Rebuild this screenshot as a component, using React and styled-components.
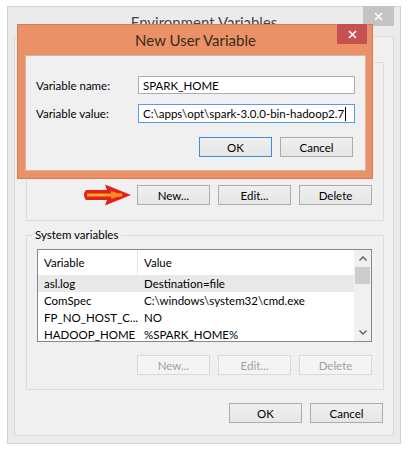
import React from 'react'
import styled, { createGlobalStyle } from 'styled-components'

const GlobalStyle = createGlobalStyle`
  body {
    margin: 0;
    background: #ffffff;
    font-family: 'Lato', 'Noto Sans', sans-serif;
    font-size: 11.5px;
    color: #000;
  }
`

const Page = styled.div`
  padding: 6px 0 0 7px;
`

const Window = styled.div`
  position: relative;
  width: 394px;
  box-sizing: border-box;
  border: 1px solid #d2d2d2;
  background: #ebebeb;
  padding: 0 6px 7px;
`

const TitleBar = styled.div`
  display: grid;
  grid-template-columns: 1fr auto 1fr;
  height: ${(p) => p.$height}px;
  align-items: center;
`

const Title = styled.div`
  grid-column: 2;
  font-size: 15px;
  color: ${(p) => p.$color};
  white-space: nowrap;
`

const CloseButton = styled.div`
  grid-column: 3;
  justify-self: end;
  align-self: start;
  width: ${(p) => p.$width}px;
  height: 20px;
  margin-top: -1px;
  margin-right: ${(p) => p.$offset}px;
  background: ${(p) => p.$bg};
  display: flex;
  align-items: center;
  justify-content: center;
`

const Client = styled.div`
  background: #f0f0f0;
  border: 1px solid #dadada;
  padding: 17px 9px 12px 11px;
`

const Group = styled.fieldset`
  margin: 0 0 ${(p) => p.$gap}px;
  border: 1px solid #dcdcdc;
  padding: 6px 11px 14px 10px;
  min-width: 0;
`

const Legend = styled.legend`
  padding: 0 3px;
  margin-left: -5px;
  height: 16px;
  line-height: 16px;
`

const List = styled.div`
  display: flex;
  height: ${(p) => p.$height}px;
  box-sizing: border-box;
  border: 1px solid #828790;
  background: #fff;
  overflow: hidden;
`

const Rows = styled.div`
  flex: 1;
`

const Row = styled.div`
  display: grid;
  grid-template-columns: 100px 1fr;
  height: ${(p) => (p.$header ? 25 : 17)}px;
  align-items: center;
  background: ${(p) => (p.$selected ? '#e9e9e9' : 'transparent')};
  white-space: nowrap;
`

const Cell = styled.div`
  padding-left: 6px;
  height: 100%;
  display: flex;
  align-items: center;
  border-right: ${(p) => (p.$divider ? '1px solid #e5e5e5' : 'none')};
`

const Scrollbar = styled.div`
  width: 17px;
  background: #f0f0f0;
  display: flex;
  flex-direction: column;
  align-items: center;
`

const ScrollArrow = styled.div`
  height: 17px;
  display: flex;
  align-items: center;
  justify-content: center;
`

const Thumb = styled.div`
  width: 15px;
  height: 17px;
  background: #cdcdcd;
`

const Track = styled.div`
  flex: 1;
`

const ButtonRow = styled.div`
  display: flex;
  justify-content: flex-end;
  align-items: center;
  gap: 8px;
  margin-top: ${(p) => p.$top}px;
  margin-right: ${(p) => p.$right || 0}px;
`

const Button = styled.div`
  width: 73px;
  height: 20px;
  box-sizing: border-box;
  display: flex;
  align-items: center;
  justify-content: center;
  border: 1px solid ${(p) => (p.$default ? '#3c8fdc' : p.$disabled ? '#d9d9d9' : '#acacac')};
  background: ${(p) => (p.$disabled ? '#f4f4f4' : 'linear-gradient(#f0f0f0, #e5e5e5)')};
  color: ${(p) => (p.$disabled ? '#a0a0a0' : '#000')};
`

const Arrow = styled.svg`
  margin-right: -3px;
`

// the New User Variable dialog sits on top of the Environment Variables window
const Dialog = styled.div`
  position: absolute;
  left: 9px;
  top: 17px;
  width: 356px;
  box-sizing: border-box;
  border: 1px solid #d77c52;
  background: #ea9168;
  padding: 0 6px 7px 7px;
`

const DialogClient = styled.div`
  background: #f0f0f0;
  border: 1px solid #d6b5a4;
  padding: 20px 10px 13px 10px;
`

const Form = styled.div`
  display: grid;
  grid-template-columns: 102px 1fr;
  row-gap: 10px;
  align-items: center;
`

const Field = styled.div`
  height: ${(p) => p.$height}px;
  box-sizing: border-box;
  border: 1px solid ${(p) => (p.$focused ? '#569de5' : '#abadb3')};
  background: #fff;
  padding-left: 4px;
  display: flex;
  align-items: center;
  white-space: nowrap;
`

const Caret = styled.span`
  display: inline-block;
  width: 1px;
  height: 14px;
  background: #000;
  margin-left: 1px;
`

const CloseIcon = () => (
  <svg width="9" height="9" viewBox="0 0 9 9">
    <path d="M1 1 L8 8 M8 1 L1 8" stroke="#fff" strokeWidth="1.6" />
  </svg>
)

const Chevron = ({ up }) => (
  <svg width="8" height="5" viewBox="0 0 8 5">
    <path d={up ? 'M0.5 4.5 L4 1 L7.5 4.5' : 'M0.5 0.5 L4 4 L7.5 0.5'} stroke="#606060" strokeWidth="1.4" fill="none" />
  </svg>
)

const systemVars = [
  ['asl.log', 'Destination=file'],
  ['ComSpec', 'C:\\windows\\system32\\cmd.exe'],
  ['FP_NO_HOST_C...', 'NO'],
  ['HADOOP_HOME', '%SPARK_HOME%'],
]

// rows is left out for the user list, which is hidden behind the dialog
const VarList = ({ rows, height, selected }) => (
  <List $height={height}>
    <Rows>
      {rows && (
        <Row $header>
          <Cell $divider>Variable</Cell>
          <Cell>Value</Cell>
        </Row>
      )}
      {rows &&
        rows.map(([name, value], i) => (
          <Row key={name} $selected={i === selected}>
            <Cell>{name}</Cell>
            <Cell>{value}</Cell>
          </Row>
        ))}
    </Rows>
    <Scrollbar>
      <ScrollArrow>
        <Chevron up />
      </ScrollArrow>
      <Thumb />
      <Track />
      <ScrollArrow>
        <Chevron />
      </ScrollArrow>
    </Scrollbar>
  </List>
)

const App = () => (
  <Page>
    <GlobalStyle />
    <Window>
      <TitleBar $height={29}>
        <Title $color="#444">Environment Variables</Title>
        <CloseButton $bg="#c4c4c4" $width={31} $offset={0}>
          <CloseIcon />
        </CloseButton>
      </TitleBar>
      <Client>
        <Group $gap={6}>
          <Legend />
          <VarList height={95} />
          <ButtonRow $top={13}>
            <Arrow width="50" height="22" viewBox="0 0 50 22">
              <path d="M4 6 L25 6 L23 0.5 L49 11 L23 21.5 L25 16 L4 16 Q0 11 4 6 Z" fill="#e5201c" />
              <path d="M5 11 L40 11" stroke="#f6a623" strokeWidth="3" />
              <path d="M29 7 L41 11 L29 15 Z" fill="#f08a24" />
            </Arrow>
            <Button>New...</Button>
            <Button>Edit...</Button>
            <Button>Delete</Button>
          </ButtonRow>
        </Group>
        <Group $gap={13}>
          <Legend>System variables</Legend>
          <VarList rows={systemVars} height={93} selected={0} />
          <ButtonRow $top={13}>
            <Button $disabled>New...</Button>
            <Button $disabled>Edit...</Button>
            <Button $disabled>Delete</Button>
          </ButtonRow>
        </Group>
        <ButtonRow $top={0} $right={1}>
          <Button>OK</Button>
          <Button>Cancel</Button>
        </ButtonRow>
      </Client>

      <Dialog>
        <TitleBar $height={30}>
          <Title $color="#3a2a20">New User Variable</Title>
          <CloseButton $bg="#c75050" $width={30} $offset={-1}>
            <CloseIcon />
          </CloseButton>
        </TitleBar>
        <DialogClient>
          <Form>
            <span>Variable name:</span>
            <Field $height={18}>SPARK_HOME</Field>
            <span>Variable value:</span>
            <Field $height={19} $focused>
              C:\apps\opt\spark-3.0.0-bin-hadoop2.7
              <Caret />
            </Field>
          </Form>
          <ButtonRow $top={14} $right={2}>
            <Button $default>OK</Button>
            <Button>Cancel</Button>
          </ButtonRow>
        </DialogClient>
      </Dialog>
    </Window>
  </Page>
)

export default App
